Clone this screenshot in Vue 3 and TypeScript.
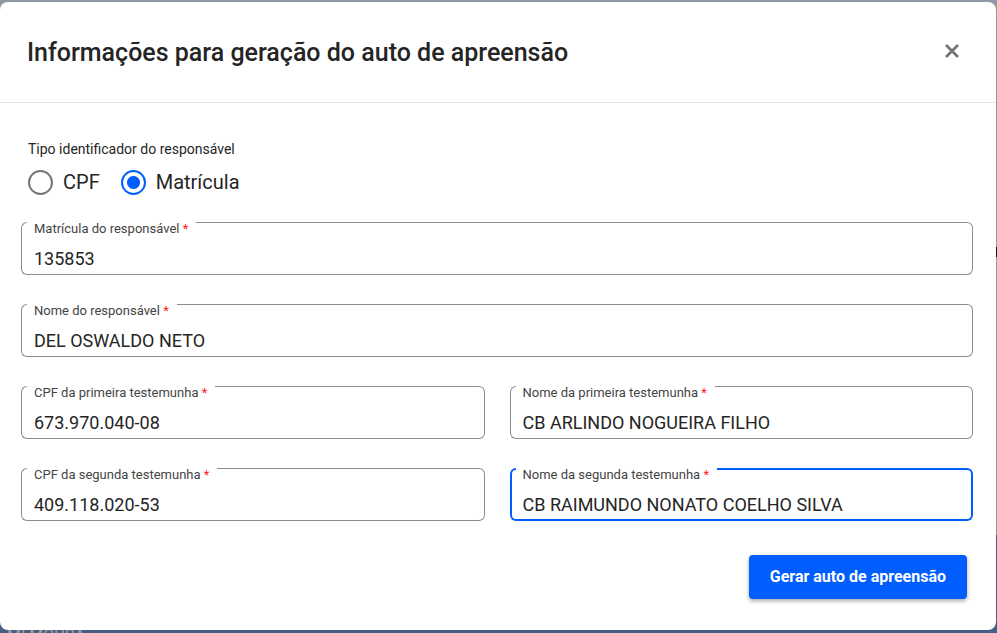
<script setup lang="ts">
import { reactive, ref } from 'vue'

type Identifier = 'cpf' | 'matricula'

interface Field {
  id: string
  label: string
  value: string
  wide: boolean
}

const identifier = ref<Identifier>('matricula')
const activeField = ref('nome-segunda')

const options: { value: Identifier; label: string }[] = [
  { value: 'cpf', label: 'CPF' },
  { value: 'matricula', label: 'Matrícula' },
]

const fields = reactive<Field[]>([
  { id: 'matricula', label: 'Matrícula do responsável', value: '135853', wide: true },
  { id: 'nome', label: 'Nome do responsável', value: 'DEL OSWALDO NETO', wide: true },
  { id: 'cpf-primeira', label: 'CPF da primeira testemunha', value: '673.970.040-08', wide: false },
  { id: 'nome-primeira', label: 'Nome da primeira testemunha', value: 'CB ARLINDO NOGUEIRA FILHO', wide: false },
  { id: 'cpf-segunda', label: 'CPF da segunda testemunha', value: '409.118.020-53', wide: false },
  { id: 'nome-segunda', label: 'Nome da segunda testemunha', value: 'CB RAIMUNDO NONATO COELHO SILVA', wide: false },
])
</script>

<template>
  <div class="backdrop">
    <span class="behind" aria-hidden="true">MI MOURA</span>
    <span class="mark" aria-hidden="true"></span>
    <section class="dialog" role="dialog" aria-modal="true" aria-labelledby="dialog-title">
      <header class="header">
        <h1 id="dialog-title" class="title">Informações para geração do auto de apreensão</h1>
        <button class="close" type="button" aria-label="Fechar">
          <svg width="16" height="16" viewBox="0 0 16 16" aria-hidden="true">
            <path d="M2 2 14 14M14 2 2 14" fill="none" stroke="currentColor" stroke-width="2.8" />
          </svg>
        </button>
      </header>
      <form class="form" @submit.prevent>
        <fieldset class="choices">
          <legend class="legend">Tipo identificador do responsável</legend>
          <div class="options">
            <label v-for="option in options" :key="option.value" class="option">
              <input v-model="identifier" class="radio" type="radio" name="identifier" :value="option.value" />
              {{ option.label }}
            </label>
          </div>
        </fieldset>
        <div class="fields">
          <div
            v-for="field in fields"
            :key="field.id"
            class="field"
            :class="{ wide: field.wide, active: activeField === field.id }"
          >
            <span class="edge start"></span>
            <label class="label" :for="field.id">{{ field.label }} <span class="required">*</span></label>
            <span class="edge end"></span>
            <input
              :id="field.id"
              v-model="field.value"
              class="input"
              type="text"
              required
              @focus="activeField = field.id"
            />
          </div>
        </div>
        <div class="actions">
          <button class="submit" type="submit">Gerar auto de apreensão</button>
        </div>
      </form>
    </section>
  </div>
</template>

<style>
body {
  margin: 0;
}
</style>

<style scoped>
.backdrop {
  position: relative;
  box-sizing: border-box;
  min-height: 100vh;
  padding: 2px 1px 3px 0;
  overflow: hidden;
  background: linear-gradient(#8f98a5 0 4px, #999999 4px 535px, #455e85 535px);
  color: #252525;
  font-family: Roboto, sans-serif;
}

.behind {
  position: absolute;
  bottom: -12px;
  left: 7px;
  color: #a39f98;
  font-size: 16px;
  line-height: 18px;
}

.mark {
  position: absolute;
  top: 247px;
  right: 0;
  width: 1px;
  height: 10px;
  background: #17171f;
}

.dialog {
  position: relative;
  border-radius: 8px;
  background: #ffffff;
}

.header {
  display: flex;
  align-items: center;
  justify-content: space-between;
  padding: 33px 32px 31px 27px;
  border-bottom: 1px solid #dde7ec;
}

.title {
  margin: 0;
  font-size: 25px;
  font-weight: 500;
  line-height: 36px;
}

.close {
  display: flex;
  margin-bottom: 4px;
  padding: 4px;
  border: 0;
  background: none;
  color: #757575;
  cursor: pointer;
}

.form {
  padding: 36px 23px 31px 21px;
}

.choices {
  margin: 0;
  padding: 0 7px;
  border: 0;
}

.legend {
  padding: 0;
  font-size: 14px;
  line-height: 20px;
}

.options {
  display: flex;
  gap: 21px;
  padding-top: 8px;
}

.option {
  display: flex;
  align-items: center;
  gap: 10px;
  font-size: 20px;
  line-height: 30px;
}

.radio {
  box-sizing: border-box;
  width: 25px;
  height: 25px;
  margin: 0;
  border: 2px solid #757575;
  border-radius: 50%;
  appearance: none;
}

.radio:checked {
  border-color: #005eff;
  background: radial-gradient(circle, #005eff 6px, transparent 7px);
}

.fields {
  display: grid;
  grid-template-columns: 1fr 1fr;
  gap: 29px 25px;
  padding-top: 25px;
}

.field {
  --line: 1px solid #8c8c8c;
  display: grid;
  grid-template-columns: 6px auto 1fr;
  height: 53px;
}

.field.active {
  --line: 2px solid #005eff;
}

.field.wide {
  grid-column: 1 / -1;
}

.edge,
.label {
  box-sizing: border-box;
  grid-row: 1;
  border-bottom: var(--line);
}

.start {
  grid-column: 1;
  border-top: var(--line);
  border-left: var(--line);
  border-radius: 6px 0 0 6px;
}

.end {
  grid-column: 3;
  border-top: var(--line);
  border-right: var(--line);
  border-radius: 0 6px 6px 0;
}

.label {
  grid-column: 2;
  padding: 0 8px 0 7px;
  color: #444444;
  font-size: 13px;
  line-height: 14px;
  white-space: nowrap;
}

.required {
  color: #ff1a1a;
}

.input {
  z-index: 1;
  grid-row: 1;
  grid-column: 1 / -1;
  min-width: 0;
  margin: 24px 13px 4px;
  padding: 0;
  border: 0;
  outline: 0;
  background: none;
  color: #252525;
  font-family: inherit;
  font-size: 18px;
  line-height: 24px;
}

.actions {
  display: flex;
  justify-content: flex-end;
  padding: 34px 6px 0 0;
}

.submit {
  padding: 0 21px;
  border: 0;
  border-radius: 4px;
  background: #005eff;
  box-shadow: 0 2px 4px rgba(0, 0, 0, 0.35);
  color: #ffffff;
  font-family: inherit;
  font-size: 16px;
  font-weight: 700;
  line-height: 44px;
  cursor: pointer;
}
</style>
